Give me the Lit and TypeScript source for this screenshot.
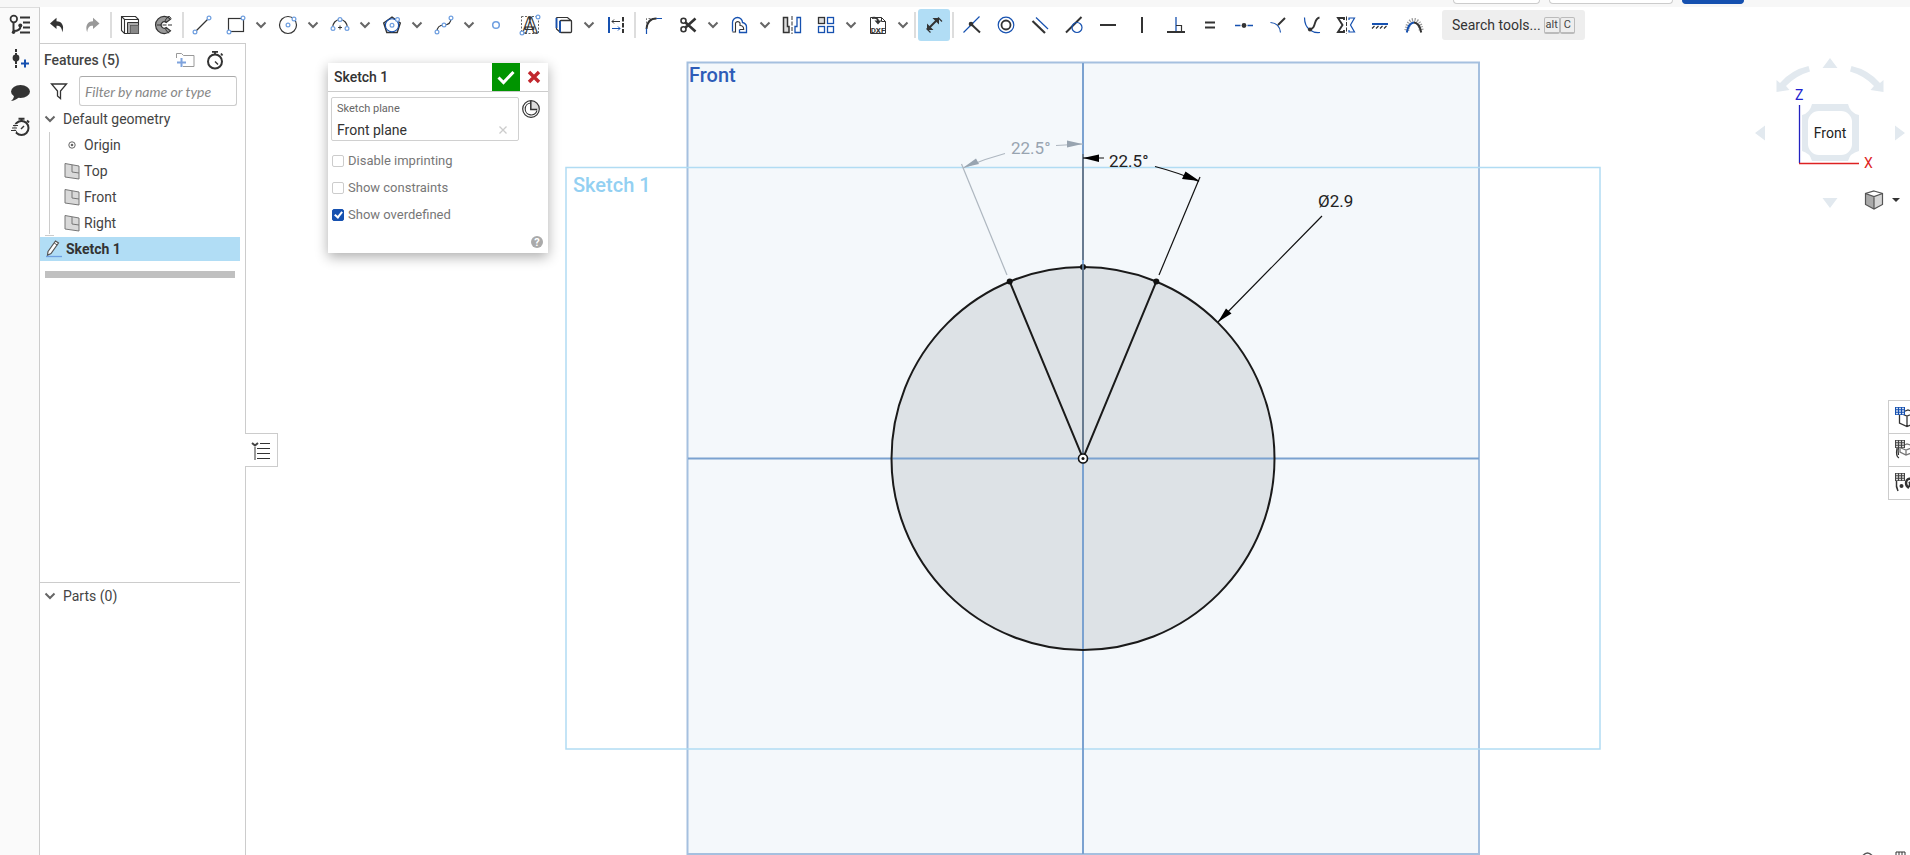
import { LitElement, html, svg, css, nothing } from "lit";
import { customElement, property } from "lit/decorators.js";

const D = "#333";
const B = "#1651b0";
const H = "#6f9fe0";

const handle = (x: number, y: number) =>
  svg`<circle cx=${x} cy=${y} r="1.9" fill="#fff" stroke=${H} stroke-width="1.2"/>`;

const tableGlyph = (c: string) => svg`
  <rect x="1" y="1" width="10" height="8" fill=${c}/>
  <path d="M2 2.500h2M5 2.500h2M8 2.500h2M2 5h2M5 5h2M8 5h2M2 7.500h2M5 7.500h2M8 7.500h2" stroke="#fff" stroke-width="1.300" opacity=".8"/>`;

const icons: Record<string, unknown> = {
  undo: svg`<path d="M10.500 4.800 4 10.500l6.500 5.600V12.700c3.600-.1 5.300 1.800 5.800 6.500C18.600 13 16 8.400 10.500 8.300Z" fill=${D}/>`,
  redo: svg`<path d="M13 4.800 19.500 10.500 13 16.100V12.700C9.400 12.600 7.700 14.500 7.200 19.200 4.900 13 7.500 8.400 13 8.300Z" fill="#999"/>`,
  extrude: svg`<path d="M3.500 3.500h14l3 3v14h-14l-3-3ZM3.500 3.500l3 3h14M6.500 6.500v14" fill="#fff" stroke=${D} stroke-width="1.100"/>
    <path d="M9.500 9.500h11v11h-11Z" fill="#aaa" stroke=${D}/><rect x="12.500" y="12.500" width="8" height="8" fill="#888" stroke="#555" stroke-width=".8"/>`,
  revolve: svg`<path d="M18.500 6.200A8.600 8.600 0 1 0 18.500 17.800L14.200 14.600A3.200 3.200 0 1 1 14.200 9.400Z" fill="#999" stroke=${D} stroke-width="1.200"/>
    <path d="M14.200 9.400l-1-2.200 3.600-4.200 2.500 2.500M14.500 14.800l-.8 2 3 3.500" fill="none" stroke=${D}/><path d="M5 12h16.500" stroke=${D} stroke-width="1.200" stroke-dasharray="4 1.500"/>`,
  line: svg`<path d="M5 19 19 5" stroke=${D} stroke-width="1.300"/>${handle(5, 19)}${handle(19, 5)}`,
  rect: svg`<rect x="4.500" y="5.500" width="15" height="13" fill="none" stroke=${D} stroke-width="1.200"/>${handle(19, 5)}${handle(5, 19)}`,
  circle: svg`<circle cx="12" cy="12" r="8.500" fill="none" stroke=${D} stroke-width="1.200"/>${handle(12, 12)}${handle(18, 6)}`,
  arc: svg`<path d="M4.500 15a7.500 8.500 0 0 1 15 0" fill="none" stroke=${D} stroke-width="1.200"/><path d="M12 12.500v4M10 14.500h4" stroke=${D}/>${handle(5, 15.5)}${handle(12, 6.5)}${handle(19, 15.5)}`,
  polygon: svg`<path d="M12 4 20.300 9.900 17.200 19.500H6.800L3.700 9.900Z" fill="none" stroke=${D} stroke-width="1.400"/><circle cx="12" cy="12.300" r="6.600" fill="none" stroke=${B} stroke-width="1.100"/>${handle(12, 12.3)}${handle(17.5, 6.5)}`,
  spline: svg`<path d="M5 19c0-5 3-7 7-7s7-2 7-7" fill="none" stroke=${D} stroke-width="1.200"/>${handle(5, 19)}${handle(12, 12)}${handle(19, 5)}`,
  point: svg`<circle cx="12" cy="12" r="3.300" fill="#fff" stroke=${H} stroke-width="1.500"/>`,
  text: svg`<rect x="3.500" y="3.500" width="17" height="17" fill="none" stroke="#666" stroke-dasharray="2 1.500"/>
    <text x="12" y="20" text-anchor="middle" font-size="22" font-weight="700" fill="#fff" stroke=${D} stroke-width="1.100">A</text>${handle(20, 4)}${handle(4, 20)}`,
  use: svg`<path d="M4.500 4.500h11l4 3.500M4.500 4.500v11.500l4 3.500" fill="none" stroke=${D} stroke-width="1.200"/><rect x="8" y="7.500" width="11.500" height="12" rx="1" fill="#fff" stroke=${D} stroke-width="1.300"/><path d="M8 8v11.500M4.500 5v10" stroke=${B} stroke-width="1.800"/>`,
  construction: svg`<path d="M5 4v16" stroke=${B} stroke-width="2"/><path d="M19 4v16" stroke=${D} stroke-width="2" stroke-dasharray="4.500 1.500"/><path d="M8 8.500h8M8 8.500l2-2M8 8.500l2 2" stroke=${D} fill="none"/><path d="M8 15.500h8M16 15.500l-2-2M16 15.500l-2 2" stroke=${B} fill="none"/>`,
  fillet: svg`<path d="M4.500 14V5.500H15" fill="none" stroke="#777" stroke-dasharray="2 1.500"/><path d="M4.500 16C5 9 9 5.500 14.500 5.500" fill="none" stroke=${D} stroke-width="1.900"/><path d="M4.500 15.500V21M14.500 5.500H20" stroke=${B} stroke-width="1.200"/>`,
  trim: svg`<circle cx="7.500" cy="7.800" r="2.500" fill="none" stroke=${D} stroke-width="1.600"/><circle cx="7.500" cy="16.200" r="2.500" fill="none" stroke=${D} stroke-width="1.600"/><path d="M9.500 9.500 19.500 18.500M9.500 14.500 19.500 5.500" stroke=${D} stroke-width="2.600"/>`,
  offset: svg`<path d="M4.500 18.500V9.500a5 5 0 0 1 10 0c3 .8 4 2 4 4.500v5.500h-7v-3" fill="none" stroke=${B} stroke-width="1.300"/><path d="M4.500 19h3V10a2.500 2.500 0 0 1 4.500 0v2.500c2.500 0 3.700.8 3.700 4h-4" fill="none" stroke=${D} stroke-width="1.100"/>`,
  mirror: svg`<path d="M3.500 4.500h4v9h1.500v6H3.500Z" fill="#ddd" stroke=${D} stroke-width="1.500"/><path d="M12 3v18" stroke=${D} stroke-dasharray="4 1.500"/><path d="M20.500 4.500h-3.500v9h-2v6h5.500Z" fill="#fff" stroke=${B} stroke-width="1.300"/>`,
  pattern: svg`<rect x="4.500" y="4.500" width="6" height="6" fill="#ddd" stroke=${D} stroke-width="1.300"/><g fill="#fff" stroke=${B} stroke-width="1.300"><rect x="13.500" y="4.500" width="6" height="6"/><rect x="4.500" y="13.500" width="6" height="6"/><rect x="13.500" y="13.500" width="6" height="6"/></g>`,
  dxf: svg`<path d="M4.500 20.500v-16h11l4 4v12Z" fill="#fff" stroke=${D}/><path d="M15.500 4.500v4h4" fill="none" stroke=${D}/><path d="M6 5c4-.8 6 .5 6.200 3.500" fill="none" stroke=${D} stroke-width="1.800"/><path d="M8.500 7.500h7l-3.500 4Z" fill=${D}/><text x="12" y="19.500" text-anchor="middle" font-size="8" font-weight="700" fill=${D}>DXF</text>`,
  dimension: svg`<path d="M7.500 14.500 14.500 7.500" stroke=${D} stroke-width="2"/><path d="M5 10.500v6.500h6.500ZM10.500 5H17v6.500Z" fill=${D}/><path d="M4.500 15.500l4 4M16 4.500l4 4" stroke=${D} stroke-width="1.200"/>`,
  coincident: svg`<path d="M3.500 19.500 11 12M12 11l7.500-7.500" stroke=${B} stroke-width="1.200"/><path d="M11 11l9 8.500" stroke=${D} stroke-width="2"/><circle cx="11" cy="11" r="2.300" fill=${D}/>`,
  concentric: svg`<circle cx="12" cy="12" r="7.800" fill="none" stroke=${B} stroke-width="1.200"/><circle cx="12" cy="12" r="4.500" fill="none" stroke=${D} stroke-width="1.800"/>`,
  parallel: svg`<path d="M4.500 8 17 20" stroke=${D} stroke-width="2.200"/><path d="M8 4.500 20 16" stroke=${B} stroke-width="1.200"/>`,
  tangent: svg`<path d="M4 19.500 19.500 4" stroke=${D} stroke-width="2"/><circle cx="15" cy="14.500" r="5" fill="none" stroke=${B} stroke-width="1.200"/>`,
  horizontal: svg`<path d="M4 12h16" stroke=${D} stroke-width="2"/>`,
  vertical: svg`<path d="M12 4v16" stroke=${D} stroke-width="2"/>`,
  perpendicular: svg`<path d="M12 4v15" stroke=${B} stroke-width="1.300"/><path d="M12 12.500h5.500V19" fill="none" stroke=${D} stroke-width="1.200"/><path d="M3 19h18" stroke=${D} stroke-width="2"/>`,
  equal: svg`<path d="M7 9.500h10M7 14.500h10" stroke=${D} stroke-width="2"/>`,
  midpoint: svg`<path d="M3 12.500h5.500M15.500 12.500H21" stroke=${B} stroke-width="1.300"/><circle cx="12" cy="12.500" r="2.400" fill=${D}/>`,
  normal: svg`<path d="M4.500 9.500c6 .5 9.500 4.500 10 10" fill="none" stroke=${B} stroke-width="1.200"/><path d="M12 12l7-7" stroke=${D} stroke-width="2"/>`,
  pierce: svg`<path d="M4.500 4.500c0 6 2 10 5.500 12.500s6 3 10 2.500" fill="none" stroke=${B} stroke-width="1.200"/><path d="M10 16.500c3.500-1 4-3 5-6.500s2-5 4.500-5.500" fill="none" stroke=${D} stroke-width="1.900"/><circle cx="10" cy="16.500" r="2.100" fill=${D}/>`,
  symmetric: svg`<path d="M10 7V5H4l4.500 7L4 19h6v-2" fill="none" stroke=${D} stroke-width="1.900"/><path d="M12.500 3.500v17" stroke=${D} stroke-dasharray="4 1.500"/><path d="M15 7V5h5.500L16.500 12l4 7H15v-2" fill="none" stroke=${B} stroke-width="1.200"/>`,
  fix: svg`<path d="M4 11h16" stroke=${B} stroke-width="2"/><path d="M4 15.500l2.500-2.500M8 15.500l2.500-2.500M12 15.500l2.500-2.500M16 15.500l2.500-2.500" stroke=${D} stroke-width="1.200"/>`,
  curvature: svg`<path d="M4.800 19.500C6 12 9 9.500 12 9.500s6 2.500 7.200 10" fill="none" stroke="#999" stroke-width="5" stroke-dasharray="1 1.300" transform="translate(0 -2)"/><path d="M4.800 19.500C6 13 9 9.800 12 9.500" fill="none" stroke=${B} stroke-width="2"/><path d="M12 9.500c3 .3 6 3.500 7.200 10" fill="none" stroke=${D} stroke-width="2"/>`,
  tree: svg`<circle cx="5.800" cy="6" r="3.300" fill="none" stroke=${D} stroke-width="1.700"/><path d="M5.500 9.500V20M5.500 18c5 0 7-1.500 7-5" stroke=${D} stroke-width="2" fill="none"/><circle cx="5.500" cy="19.300" r="1.700" fill=${D}/><circle cx="12.300" cy="12.500" r="2" fill=${D}/><path d="M12 4.500h10M15 9.500h7M15 14.500h7M12 19.500h10" stroke=${D} stroke-width="2"/>`,
  insert: svg`<path d="M8 2v3M8 6v3M8 14v3M8 18v3" stroke=${D} stroke-width="2"/><circle cx="8" cy="11" r="3.400" fill=${D}/><path d="M13 16.500h8M17 12.500v8" stroke=${B} stroke-width="2"/>`,
  comment: svg`<ellipse cx="12.500" cy="10.500" rx="9.500" ry="6.500" fill=${D}/><path d="M6 14c0 3-1 4.500-3 6 4-.5 6-2 8-4Z" fill=${D}/>`,
  speed: svg`<circle cx="13.500" cy="13" r="7" fill="none" stroke=${D} stroke-width="2"/><path d="M10.500 3.800h6M13.500 4v3M19 5.500l2 2" stroke=${D} stroke-width="2"/><path d="M13 14l3-3" stroke=${D} stroke-width="1.400"/><path d="M5 10.500h5M4 13.500h5M3 16.500h5" stroke="#fafafa" stroke-width="2.500"/><path d="M5 10.500h5M4 13h5M3 15.500h5" stroke=${D} stroke-width="1.200"/>`,
  folder: svg`<path d="M3.500 8V5.500h5l2 2h10.500v11H10M3.500 8v2" fill="none" stroke="#999"/><path d="M4 14.500h9M8.500 10v9" stroke="#7fa3dd" stroke-width="2"/>`,
  stopwatch: svg`<circle cx="12" cy="13.500" r="7" fill="none" stroke=${D} stroke-width="2"/><path d="M9 3.800h6M12 4v3M18 5.500l1.500 2" stroke=${D} stroke-width="1.800"/><path d="M12 13.500l3 3" stroke=${D} stroke-width="1.400"/>`,
  filter: svg`<path d="M4.500 5h15l-6 7v7.500l-3-2.500v-5Z" fill="none" stroke=${D} stroke-width="1.300"/>`,
  origin: svg`<circle cx="12" cy="12" r="3.200" fill="none" stroke="#666"/><circle cx="12" cy="12" r="1.300" fill="#666"/>`,
  plane: svg`<path d="M5 4.500l14 2.500v13L5 18Z" fill="#d9d9d9" stroke="#777"/><path d="M12 6v7l7 1" fill="none" stroke="#777"/>`,
  pencil: svg`<path d="M6 14.500 13.500 4l3 2L9 16.500l-3.500 1.700Z" fill="#fff" stroke="#555" stroke-width="1.200"/><path d="M12.200 6l3 2" stroke="#555"/><path d="M4 19.500h16" stroke=${H} stroke-width="1.300"/>`,
  check: svg`<path d="M4.500 12.500 9.500 17.500 19.500 7" fill="none" stroke="#fff" stroke-width="3"/>`,
  close: svg`<path d="M7 7l10 10M17 7 7 17" stroke="#c1272d" stroke-width="3.400"/>`,
  clear: svg`<path d="M8.500 8.500l7 7M15.500 8.500l-7 7" stroke="#ccc" stroke-width="1.300"/>`,
  clock: svg`<path d="M12 12V3.500A8.500 8.500 0 0 1 20.500 12Z" fill="#ddd"/><circle cx="12" cy="12" r="8.300" fill="none" stroke=${D} stroke-width="1.200"/><path d="M11.500 6A6 6 0 1 0 18 13.500" fill="none" stroke=${D} stroke-width="1.100"/><path d="M11.800 4v8.500h6.500" fill="none" stroke=${D} stroke-width="1.500"/>`,
  help: svg`<circle cx="12" cy="12" r="6" fill="#aaa"/><text x="12" y="16" text-anchor="middle" font-size="11" font-weight="700" fill="#fff">?</text>`,
  list: svg`<path d="M3 5l3 2.500L9 5" fill="none" stroke="#444" stroke-width="2"/><path d="M6 9v13" stroke="#999" stroke-width="2"/><path d="M11 5.500h10M8 10.500h13M8 15.500h13M8 20.500h13" stroke=${D} stroke-width="1.200"/>`,
  tableCube: svg`<path d="M5.500 9v8l7.500 3.500 8-3.500V6l-7-2-4 1.500M8 8l5 2 8-3M13 10v10" fill="none" stroke=${D} stroke-width="1.300"/>${tableGlyph(B)}`,
  tableBox: svg`<path d="M6 9v4l6 3 8-3V7l-7-2-4 1.500M7 9l5 2 8-3M12 11v5" fill="none" stroke="#777" stroke-width="1.300"/><path d="M3 9c-1 5 0 9 2 10M4.500 9c-1 3 0 4 0 7" fill="none" stroke=${D} stroke-width="1.200"/>${tableGlyph("#444")}`,
  tableVar: svg`<path d="M2.500 9c-.5 4 0 7 1.500 10" fill="none" stroke=${D} stroke-width="1.500"/><circle cx="7.500" cy="14" r="2" fill=${D}/><path d="M17 7c-5-2-7 6-2 9M15 10l6 6M22 7c-4 2-7 5-6 8" fill="none" stroke=${D} stroke-width="2.400"/>${tableGlyph("#444")}`,
  cube: svg`<path d="M12 3l8.500 2.500v11L12 21l-8.500-4.500v-11Z" fill="#aaa"/><path d="M12 3l8.500 2.500L12 8.500 3.500 5.500Z" fill="#fff"/><path d="M12 8.500l8.500-3v11L12 21Z" fill="#d5d5d5"/><path d="M12 3l8.500 2.500v11L12 21l-8.500-4.500v-11ZM3.500 5.500l8.500 3 8.500-3M12 8.500V21" fill="none" stroke="#555" stroke-width="1.200"/>`,
};

const FONT = css`Roboto, "Liberation Sans", sans-serif`;

@customElement("ui-icon")
class UiIcon extends LitElement {
  @property() name = "";
  static styles = css`
    :host { display: block; width: 24px; height: 24px; flex: none; }
    svg { display: block; font-family: ${FONT}; }
  `;
  render() {
    return html`<svg width="24" height="24" viewBox="0 0 24 24" aria-hidden="true">${icons[this.name] ?? nothing}</svg>`;
  }
}

type Tool = [name: string, label: string, menu?: boolean];
const groups: Tool[][] = [
  [["undo", "Undo"], ["redo", "Redo"]],
  [["extrude", "Extrude"], ["revolve", "Revolve"]],
  [["line", "Line"], ["rect", "Corner rectangle", true], ["circle", "Circle", true], ["arc", "Arc", true], ["polygon", "Polygon", true],
   ["spline", "Spline", true], ["point", "Point"], ["text", "Text"], ["use", "Use", true], ["construction", "Construction"]],
  [["fillet", "Sketch fillet"], ["trim", "Trim", true], ["offset", "Offset", true], ["mirror", "Mirror"], ["pattern", "Pattern", true], ["dxf", "Insert DXF", true]],
  [["dimension", "Dimension"]],
  [["coincident", "Coincident"], ["concentric", "Concentric"], ["parallel", "Parallel"], ["tangent", "Tangent"], ["horizontal", "Horizontal"],
   ["vertical", "Vertical"], ["perpendicular", "Perpendicular"], ["equal", "Equal"], ["midpoint", "Midpoint"], ["normal", "Normal"],
   ["pierce", "Pierce"], ["symmetric", "Symmetric"], ["fix", "Fix"], ["curvature", "Curvature"]],
];

const chevron = html`<svg width="12" height="8" viewBox="0 0 12 8" aria-hidden="true"><path d="M1.500 1.500 6 6l4.500-4.500" fill="none" stroke="#666" stroke-width="2"/></svg>`;

@customElement("sketch-toolbar")
class SketchToolbar extends LitElement {
  static styles = css`
    :host { display: flex; align-items: center; height: 36px; padding-left: 1px; background: #fff; font-family: ${FONT}; flex: none; }
    button { border: 0; padding: 0; margin: 0; background: none; display: flex; align-items: center; justify-content: center; flex: none; font-family: inherit; }
    .group { display: flex; align-items: center; }
    .group + .group::before { content: ""; width: 2px; height: 26px; margin: 0 1px; background: #ddd; }
    .tool { width: 32px; height: 32px; margin: 0 1px; border-radius: 3px; }
    .active { background: #b1ddf5; }
    .menu { width: 18px; height: 32px; padding-right: 2px; }
    .search { height: 30px; margin-left: 11px; padding: 0 10px; background: #eee; border-radius: 3px; color: #333; font-size: 14px; white-space: nowrap; }
    .search span { margin-right: 3px; }
    kbd { font-family: inherit; font-size: 11px; line-height: 14px; border: 1px solid #bbb; border-bottom-width: 2px; border-radius: 2px; padding: 0 1px; color: #444; }
    .key { padding: 0 3px; }
  `;
  render() {
    return html`
      ${groups.map((g) => html`<div class="group">${g.map(([name, label, menu]) => html`
        <button class="tool ${name === "dimension" ? "active" : ""}" aria-label=${label}><ui-icon name=${name}></ui-icon></button>
        ${menu ? html`<button class="menu" aria-label="${label} options">${chevron}</button>` : nothing}`)}</div>`)}
      <button class="search"><span>Search tools...</span><kbd>alt</kbd><kbd class="key">C</kbd></button>`;
  }
}

@customElement("feature-panel")
class FeaturePanel extends LitElement {
  static styles = css`
    :host { display: flex; flex-direction: column; width: 205px; flex: none; border-top: 1px solid #ccc; border-right: 1px solid #ccc; background: #fff; font: 14px/26px ${FONT}; color: #444; }
    button { border: 0; padding: 0; margin: 0; background: none; font: inherit; color: inherit; }
    .features { flex: 1; display: flex; flex-direction: column; }
    .head { display: flex; align-items: center; height: 32px; padding: 0 18px 0 4px; }
    .head h2 { flex: 1; margin: 0; font: inherit; font-weight: 500; }
    .head button + button { margin-left: 6px; }
    .filter { display: flex; align-items: center; height: 30px; padding: 0 8px 0 7px; gap: 8px; }
    .filter input { flex: 1; min-width: 0; height: 30px; box-sizing: border-box; border: 1px solid #ccc; border-top-color: #aaa; border-radius: 3px; padding: 0 5px; font: italic 14px Lato, sans-serif; color: #444; outline: none; }
    .filter input::placeholder { color: #888; opacity: 1; }
    .group { display: flex; align-items: center; height: 26px; gap: 7px; padding-left: 4px; text-align: left; }
    .children { list-style: none; margin: 0 0 3px 9px; padding: 0 0 0 10px; border-left: 1px solid #ccc; height: 102px; }
    .children li { display: flex; align-items: center; height: 26px; }
    .foot { width: 9px; height: 1px; background: #ccc; margin: -2px 0 1px 5px; }
    .selected { display: flex; align-items: center; height: 24px; margin-right: 5px; padding-left: 2px; background: #b1ddf5; font-weight: 700; color: #333; }
    .rollback { height: 7px; margin: 10px 10px 0 5px; background: #c0c0c0; }
    .parts { height: 273px; margin-right: 5px; box-sizing: border-box; border-top: 1px solid #ccc; }
  `;
  render() {
    return html`
      <section class="features">
        <div class="head"><h2>Features (5)</h2>
          <button aria-label="Add folder"><ui-icon name="folder"></ui-icon></button>
          <button aria-label="Regeneration times"><ui-icon name="stopwatch"></ui-icon></button></div>
        <div class="filter"><ui-icon name="filter"></ui-icon><input aria-label="Filter features" placeholder="Filter by name or type" /></div>
        <button class="group">${chevron}<span>Default geometry</span></button>
        <ul class="children">
          ${["Origin", "Top", "Front", "Right"].map((n) => html`<li><ui-icon name=${n === "Origin" ? "origin" : "plane"}></ui-icon>${n}</li>`)}
        </ul>
        <div class="foot"></div>
        <div class="selected"><ui-icon name="pencil"></ui-icon>Sketch 1</div>
        <div class="rollback"></div>
      </section>
      <section class="parts"><button class="group">${chevron}<span>Parts (0)</span></button></section>`;
  }
}

@customElement("sketch-dialog")
class SketchDialog extends LitElement {
  static styles = css`
    :host { display: block; width: 220px; background: #fff; box-shadow: 0 4px 12px rgba(0,0,0,.32); font: 14px/18px ${FONT}; color: #333; }
    button { border: 0; padding: 0; margin: 0; background: none; display: flex; align-items: center; justify-content: center; }
    header { display: flex; height: 28px; border-bottom: 1px solid #ccc; }
    h2 { flex: 1; margin: 0; padding-left: 6px; font: 500 14px/28px ${FONT}; }
    header button { width: 28px; }
    .ok { background: #009400; }
    .row { display: flex; align-items: flex-start; padding: 5px 5px 0 3px; }
    .field { flex: 1; display: grid; grid-template-columns: 1fr auto; align-items: center; height: 44px; box-sizing: border-box; border: 1px solid #d0d0d0; border-radius: 2px; padding: 2px 3px 0 5px; }
    .field small { grid-column: 1 / 3; font-size: 11px; line-height: 18px; color: #666; }
    .field span { line-height: 22px; }
    .checks { display: flex; flex-direction: column; gap: 9px; padding: 11px 4px 0; }
    label { display: flex; align-items: center; gap: 4px; font-size: 13px; color: #777; }
    input { appearance: none; position: relative; width: 12px; height: 12px; box-sizing: border-box; margin: 0; border: 1px solid #ccc; border-radius: 2px; background: #fff; }
    input:checked { border-color: #1651b0; background: #1651b0; }
    input:checked::after { content: ""; position: absolute; left: 3px; top: 0; width: 3px; height: 6px; border: solid #fff; border-width: 0 2px 2px 0; transform: rotate(38deg); }
    footer { display: flex; justify-content: flex-end; padding: 6px 0 0; height: 23px; margin-right: -1px; }
  `;
  render() {
    return html`
      <header><h2>Sketch 1</h2><button class="ok" aria-label="Accept"><ui-icon name="check"></ui-icon></button><button aria-label="Cancel"><ui-icon name="close"></ui-icon></button></header>
      <div class="row"><div class="field"><small>Sketch plane</small><span>Front plane</span><button aria-label="Clear plane"><ui-icon name="clear"></ui-icon></button></div>
        <button aria-label="Final"><ui-icon name="clock"></ui-icon></button></div>
      <div class="checks">
        <label><input type="checkbox" />Disable imprinting</label>
        <label><input type="checkbox" />Show constraints</label>
        <label><input type="checkbox" checked />Show overdefined</label>
      </div>
      <footer><button aria-label="Help"><ui-icon name="help"></ui-icon></button></footer>`;
  }
}

@customElement("sketch-stage")
class SketchStage extends LitElement {
  static styles = css`
    :host { display: block; position: relative; flex: 1; min-width: 0; font-family: ${FONT}; }
    .drawing { display: block; position: absolute; inset: 0; width: 100%; height: 100%; }
    button { padding: 0; margin: 0; background: #fff; border: 1px solid #ccc; display: flex; align-items: center; }
    sketch-dialog { position: absolute; left: 82px; top: 20px; }
    .list { position: absolute; left: -1px; top: calc(50% + 1px); transform: translateY(-50%); width: 33px; height: 34px; border-left: 0; padding: 4px; box-sizing: border-box; align-items: flex-start; }
    .view { position: absolute; right: 0; top: 7px; width: 160px; height: 165px; display: flex; flex-direction: column; }
    .view > svg { display: block; }
    .mode { position: absolute; right: 9px; bottom: 3px; border: 0; background: none; gap: 5px; }
    .tables { position: absolute; right: 0; top: calc(50% + 1px); transform: translateY(-50%); width: 22px; overflow: hidden; }
    .tables button { width: 40px; height: 34px; margin-bottom: -1px; padding: 2px 0 0 5px; box-sizing: border-box; }
    .tables button:last-child { margin-bottom: 0; }
    .status { position: absolute; right: 3px; bottom: 0; display: block; }
  `;
  render() {
    return html`
      <svg class="drawing" viewBox="246 43 1664 812" role="img" aria-label="Sketch 1 on the Front plane">
        <rect x="687.500" y="62.500" width="791.500" height="791.500" fill="#f4f8fb" stroke="#a5c0df" stroke-width="2"/>
        <rect x="566" y="167.500" width="1034" height="581.500" fill="none" stroke="#b1dcf3" stroke-width="1.500"/>
        <circle cx="1083" cy="458.500" r="191.500" fill="#dde2e6"/>
        <path d="M688 458.500H1479M1083 63V854" stroke="#7ba2d0" stroke-width="2"/>
        <path d="M1083 154V260M1083 268V454" stroke="#687b90" stroke-width="2"/>
        <circle cx="1083" cy="458.500" r="191.500" fill="none" stroke="#1a1a1a" stroke-width="2"/>
        <path d="M1009.700 281.600 1083 458.500 1156.300 281.600" fill="none" stroke="#1a1a1a" stroke-width="2"/>
        <circle cx="1009.700" cy="281.600" r="3" fill="#111"/><circle cx="1156.300" cy="281.600" r="3" fill="#111"/><circle cx="1083" cy="267" r="3" fill="#111"/>
        <path d="M1083 264v6" stroke="#56708c" stroke-width="2"/>
        <circle cx="1083" cy="458.500" r="4.500" fill="#fff" stroke="#111" stroke-width="1.600"/><circle cx="1083" cy="458.500" r="1.500" fill="#111"/>
        <g fill="none" stroke="#aeb7c0" stroke-width="1.200"><path d="M961.500 164 1007 275"/><path d="M963 168Q984 159 1005 153.500M1056 145.500 1083 144"/></g>
        <path d="M963.500 167.500l12.500-9 3 5.500ZM1082.500 144l-15.500-3.500v7Z" fill="#98a4b0"/>
        <g fill="none" stroke="#111" stroke-width="1.200"><path d="M1200 177 1159 275"/><path d="M1083 158H1104M1155 166.500Q1178 172.500 1199 181.500M1322 216 1218 322"/></g>
        <path d="M1083 158l16-3.500v7.500ZM1199.500 181l-14-9.500-3.500 7.500ZM1218 322l8-13.500 5.500 5Z" fill="#000"/>
        <g font-size="17"><text x="1011" y="154" fill="#98a4b0">22.5°</text><text x="1109" y="167" fill="#222">22.5°</text><text x="1318" y="207" fill="#222">Ø2.9</text></g>
        <g font-size="20" font-weight="500"><text x="689" y="82" fill="#2e5cb8">Front</text><text x="573" y="192" fill="#93d0f2">Sketch 1</text></g>
      </svg>
      <sketch-dialog></sketch-dialog>
      <button class="list" aria-label="Toggle feature list"><ui-icon name="list"></ui-icon></button>
      <div class="view">
        <svg width="160" height="160" viewBox="1750 50 160 160" role="img" aria-label="View cube, Front">
          <g fill="#e2e9ef">
            <path d="M1830 58l7.500 10h-15ZM1830 208l7.500-10h-15ZM1755 133l10-7.500v15ZM1905 133l-10-7.500v15Z"/>
            <path d="M1808.500 66l1.500 5.500q-14 4-24 14.500l3.500 4-13 2v-12l3.500 3q11-13 28.500-17ZM1851.500 66l-1.500 5.500q14 4 24 14.500l-3.500 4 13 2v-12l-3.500 3q-11-13-28.500-17Z"/>
            <path d="M1812 104h36q2 9 11 11v36q-9 2-11 10h-36q-2-8-10-10v-36q8-2 10-11Z"/>
          </g>
          <rect x="1808" y="111" width="44" height="44" rx="11" fill="#fff"/>
          <path d="M1799.500 105v58" stroke="#2222c0" stroke-width="1.300"/><path d="M1799 163.500h60" stroke="#d22" stroke-width="1.300"/>
          <g font-size="14"><text x="1830" y="138" text-anchor="middle" fill="#222">Front</text><text x="1795" y="100" fill="#2222d0">Z</text><text x="1864" y="168" fill="#d22">X</text></g>
        </svg>
        <button class="mode" aria-label="View options"><ui-icon name="cube"></ui-icon><svg width="10" height="6" viewBox="0 0 10 6" aria-hidden="true"><path d="M1 1h8L5 5Z" fill="#333"/></svg></button>
      </div>
      <div class="tables">
        <button aria-label="Configurations"><ui-icon name="tableCube"></ui-icon></button>
        <button aria-label="Custom tables"><ui-icon name="tableBox"></ui-icon></button>
        <button aria-label="Variables"><ui-icon name="tableVar"></ui-icon></button>
      </div>
      <svg class="status" width="46" height="4" viewBox="0 0 46 4" aria-hidden="true"><path d="M2 4.500q4.500-5 9 0" fill="none" stroke="#555" stroke-width="1.500"/><path d="M35 4V1h9v3M38 1v3M41 1v3" fill="none" stroke="#333"/></svg>`;
  }
}

@customElement("app-root")
class AppRoot extends LitElement {
  static styles = css`
    :host { display: flex; flex-direction: column; height: 100vh; overflow: hidden; background: #fff; font-family: ${FONT}; }
    .strip { display: flex; justify-content: flex-end; gap: 9px; height: 7px; padding-right: 166px; background: #f7f7f7; flex: none; }
    .tab { height: 4px; box-sizing: border-box; border: 1px solid #ccc; border-top: 0; border-radius: 0 0 4px 4px; background: #fff; }
    .small { width: 87px; }
    .wide { width: 124px; }
    .primary { width: 62px; border-color: #1651b0; background: #1651b0; }
    .body { display: flex; flex: 1; min-height: 0; }
    .rail { display: flex; flex-direction: column; width: 39px; flex: none; background: #fafafa; border-right: 1px solid #ccc; border-top: 1px solid #ddd; }
    .rail button { border: 0; margin: 0; padding: 0; height: 34px; background: none; display: flex; align-items: center; justify-content: center; }
    .main { display: flex; flex-direction: column; flex: 1; min-width: 0; }
    .work { display: flex; flex: 1; min-height: 0; }
  `;
  render() {
    return html`
      <div class="strip"><div class="tab small"></div><div class="tab wide"></div><div class="tab primary"></div></div>
      <div class="body">
        <nav class="rail" aria-label="Panels">
          <button aria-label="Feature list"><ui-icon name="tree"></ui-icon></button>
          <button aria-label="Insert"><ui-icon name="insert"></ui-icon></button>
          <button aria-label="Comments"><ui-icon name="comment"></ui-icon></button>
          <button aria-label="Performance"><ui-icon name="speed"></ui-icon></button>
        </nav>
        <div class="main">
          <sketch-toolbar></sketch-toolbar>
          <div class="work"><feature-panel></feature-panel><sketch-stage></sketch-stage></div>
        </div>
      </div>`;
  }
}
